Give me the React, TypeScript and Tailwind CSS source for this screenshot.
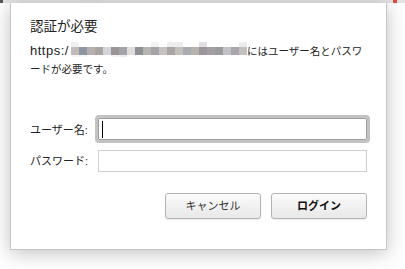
import React from 'react';

const blurCols = [
  ['#f0f0f0', '#c0bcbb', '#f4f4f4'],
  ['#ffffff', '#8d96a0', '#f6f6f6'],
  ['#ffffff', '#b5b0ae', '#ffffff'],
  ['#ffffff', '#aaa5a3', '#ffffff'],
  ['#ffffff', '#d4d5da', '#ffffff'],
  ['#ffffff', '#9c9396', '#f4f4f4'],
  ['#ffffff', '#a3a4aa', '#ececec'],
  ['#ffffff', '#e0dcd9', '#ffffff'],
  ['#ffffff', '#8f8f96', '#ffffff'],
  ['#ffffff', '#b8b4b0', '#ffffff'],
  ['#f2f2f2', '#a5a3a8', '#ffffff'],
  ['#ffffff', '#c6c2c0', '#ffffff'],
  ['#ededed', '#a9a5a5', '#ffffff'],
  ['#ededed', '#c3c0bb', '#ffffff'],
  ['#ffffff', '#a9acb2', '#ffffff'],
  ['#ffffff', '#b8b3ad', '#ffffff'],
  ['#e2dfe2', '#9c959c', '#ffffff'],
  ['#ffffff', '#a59ea5', '#ffffff'],
  ['#ffffff', '#9b9a9c', '#ffffff'],
  ['#ffffff', '#c3c2c9', '#ffffff'],
  ['#ffffff', '#aaa5aa', '#ffffff'],
  ['#ececec', '#c4c0c0', '#ffffff'],
];

const App = () => {
  return (
    <div className="w-[405px] h-[269px] bg-white overflow-hidden font-['Liberation_Sans','Noto_Sans_CJK_JP',sans-serif]">
      {/* browser strip behind the sheet */}
      <div className="h-[3px] bg-[#e4e4e4] flex">
        <div className="w-[3px] bg-[#555]" />
        <div className="w-[78px]" />
        <div className="w-[20px] bg-[#cfcfcf]" />
        <div className="w-[292px]" />
        <div className="w-[4px] bg-[#d84a3f]" />
      </div>

      {/* dialog */}
      <div className="ml-[10px] w-[377px] h-[247px] border border-[#c6c6c6] border-t-0 bg-white shadow-[0_3px_18px_rgba(0,0,0,0.25)] px-[19px] pt-[15px] text-[#222]">
        <h1 className="text-[13.5px] leading-[18px] font-normal">認証が必要</h1>

        <p className="mt-[6px] text-[13px] leading-[17px] text-[#222]">
          <span className="tracking-[0.5px]">https:/</span>
          <span className="ml-[2px] inline-flex align-top h-[15px]">
            {blurCols.map((c, i) => (
              <span key={i} className="flex flex-col w-[8px] h-[15px]">
                <span className="h-[5px]" style={{ backgroundColor: c[0] }} />
                <span className="h-[8px]" style={{ backgroundColor: c[1] }} />
                <span className="h-[2px]" style={{ backgroundColor: c[2] }} />
              </span>
            ))}
          </span>
          <span className="text-[10.5px]">にはユーザー名とパスワードが必要です。</span>
        </p>

        <div className="mt-[40px] grid grid-cols-[68px_269px] gap-y-[10px] items-center text-[11px] text-[#222]">
          <span className="pt-[3px]">ユーザー名:</span>
          <div className="h-[22px] border border-[#9e9e9e] bg-white rounded-[1px] outline-[3px] outline-solid outline-[#c3c3c3] flex items-center pl-[3px]">
            <span className="w-px h-[17px] bg-black" />
          </div>
          <span className="pt-[1px]">パスワード:</span>
          <div className="h-[22px] border border-[#cfcfcf] bg-white" />
        </div>

        <div className="mt-[21px] flex justify-end gap-[10px] text-[11px]">
          <button className="w-[96px] h-[26px] rounded-[3px] border border-[#b4b4b4] bg-gradient-to-b from-[#fbfbfb] to-[#e8e8e8] text-[#333] shadow-[0_1px_1px_rgba(0,0,0,0.08)]">
            キャンセル
          </button>
          <button className="w-[96px] h-[26px] rounded-[3px] border border-[#b4b4b4] bg-gradient-to-b from-[#fbfbfb] to-[#e8e8e8] text-[#111] font-bold shadow-[0_1px_1px_rgba(0,0,0,0.08)]">
            ログイン
          </button>
        </div>
      </div>
    </div>
  );
};

export default App;
